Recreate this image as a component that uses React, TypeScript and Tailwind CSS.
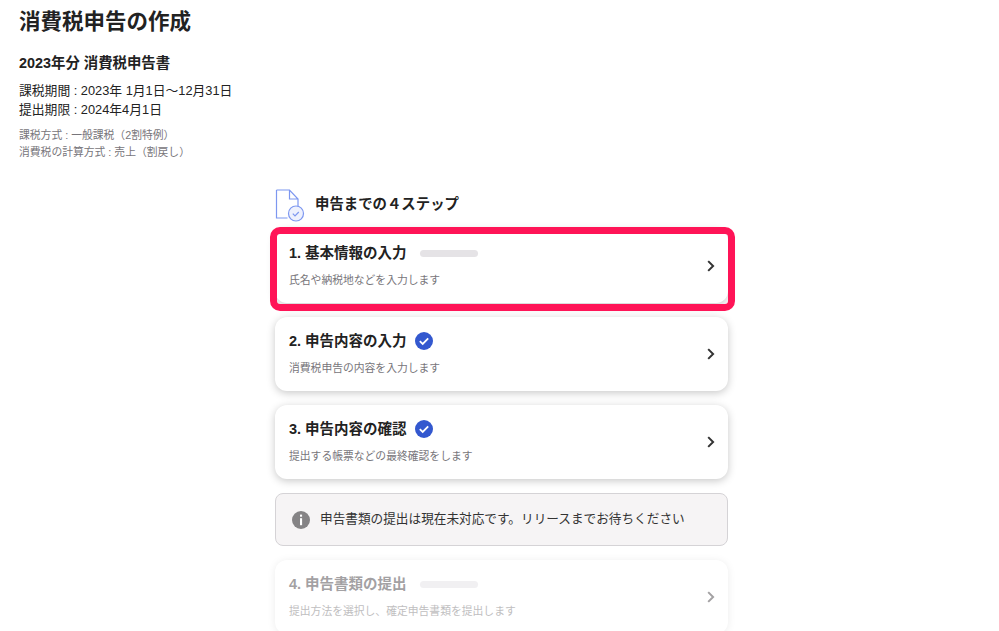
const FONT = "font-['Liberation_Sans','Noto_Sans_CJK_JP',sans-serif]";

function Chevron({ muted }: { muted?: boolean }) {
  return (
    <svg width="24" height="24" viewBox="0 0 24 24" className="shrink-0">
      <path d="M9.2 7.1 14.1 12l-4.9 4.9" fill="none" stroke={muted ? "#a3a1a3" : "#333"} strokeWidth="2" />
    </svg>
  );
}

function Check() {
  return (
    <svg width="18" height="18" viewBox="0 0 18 18" className="ml-[8px]">
      <circle cx="9" cy="9" r="9" fill="#3358cf" />
      <path d="M4.8 9.2 7.7 12l5.5-5.6" fill="none" stroke="#fff" strokeWidth="1.8" />
    </svg>
  );
}

function Bar({ muted }: { muted?: boolean }) {
  return <div className={`ml-[13px] h-[7px] w-[58px] rounded-full ${muted ? "bg-[#f1f0f2]" : "bg-[#e5e3e6]"}`} />;
}

function Card({ title, desc, children, muted }: { title: string; desc: string; children: React.ReactNode; muted?: boolean }) {
  return (
    <div className={`flex h-[74px] w-[453px] items-center justify-between rounded-[12px] bg-white pl-[14px] pr-[5px] ${muted ? "shadow-[0_1px_8px_rgba(0,0,0,0.08)]" : "shadow-[0_2px_8px_rgba(0,0,0,0.22)]"}`}>
      <div>
        <div className="flex h-[18px] items-center">
          <span className={`text-[14.5px] font-bold leading-[18px] ${muted ? "text-[#a3a1a3]" : "text-[#222]"}`}>{title}</span>
          {children}
        </div>
        <p className={`mt-[10px] text-[10.8px] leading-[16px] ${muted ? "text-[#c0bec0]" : "text-[#77757a]"}`}>{desc}</p>
      </div>
      <Chevron muted={muted} />
    </div>
  );
}

export default function App() {
  return (
    <div className={`${FONT} h-[631px] w-[999px] overflow-hidden bg-white pl-[19px] pt-[8px] text-[#222]`}>
      <h1 className="text-[21.5px] font-bold leading-[28px]">消費税申告の作成</h1>
      <h2 className="mt-[17px] text-[14.4px] font-bold leading-[20px]">2023年分 消費税申告書</h2>
      <p className="mt-[8px] text-[12.8px] leading-[19px]">課税期間 : 2023年 1月1日～12月31日</p>
      <p className="text-[12.8px] leading-[19px]">提出期限 : 2024年4月1日</p>
      <p className="mt-[8px] text-[10.8px] leading-[17px] text-[#77757a]">課税方式 : 一般課税（2割特例）</p>
      <p className="text-[10.8px] leading-[17px] text-[#77757a]">消費税の計算方式 : 売上（割戻し）</p>

      <div className="ml-[256px] mt-[28px] flex w-[453px] flex-col">
        <div className="flex h-[32px] items-center">
          <svg width="30" height="33" viewBox="0 0 30 33">
            <path d="M1.5 1h13L23 10v9M14.5 1v9H23M1.5 1v28h11" fill="#fff" stroke="#7d97f0" strokeWidth="1.2" />
            <circle cx="21" cy="24.5" r="7.5" fill="#eef1fd" stroke="#7d97f0" strokeWidth="1.2" />
            <path d="M17.8 24.6 20 26.8l3.8-3.8" fill="none" stroke="#7d97f0" strokeWidth="1.2" />
          </svg>
          <span className="ml-[10px] text-[14.4px] font-bold">申告までの４ステップ</span>
        </div>

        <div className="relative mt-[8px]">
          <Card title="1. 基本情報の入力" desc="氏名や納税地などを入力します"><Bar /></Card>
          <div className="absolute left-[-5px] top-[-2px] h-[84px] w-[465px] rounded-[10px] border-[7px] border-[#ff1457]" />
        </div>

        <div className="mt-[14px]">
          <Card title="2. 申告内容の入力" desc="消費税申告の内容を入力します"><Check /></Card>
        </div>
        <div className="mt-[14px]">
          <Card title="3. 申告内容の確認" desc="提出する帳票などの最終確認をします"><Check /></Card>
        </div>

        <div className="mt-[14px] flex h-[53px] items-center rounded-[8px] border border-[#d5d3d6] bg-[#f6f4f5] pl-[16px]">
          <svg width="18" height="18" viewBox="0 0 18 18">
            <circle cx="9" cy="9" r="9" fill="#858385" />
            <rect x="8" y="3.6" width="2.1" height="2.1" fill="#fff" />
            <rect x="8" y="7.2" width="2.1" height="7" fill="#fff" />
          </svg>
          <span className="ml-[10px] text-[12.65px] text-[#333]">申告書類の提出は現在未対応です。リリースまでお待ちください</span>
        </div>

        <div className="mt-[14px]">
          <Card muted title="4. 申告書類の提出" desc="提出方法を選択し、確定申告書類を提出します"><Bar muted /></Card>
        </div>
      </div>
    </div>
  );
}
